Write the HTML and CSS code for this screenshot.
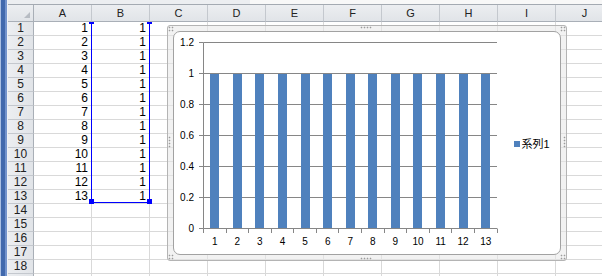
FILE: index.html
```html
<!DOCTYPE html>
<html lang="ja">
<head>
    <meta charset="UTF-8">
    <title>Sheet1 - グラフ</title>
    <link rel="stylesheet" href="styles.css">
</head>
<body>
    <div class="window">
        <div class="side-strip"></div>
        <div class="sheet">
            <div class="top-bar"></div>
            <div class="col-headers" id="col-headers">
                <div class="corner"></div>
            </div>
            <div class="rows" id="rows">
                <div class="range"></div>
                <div class="handle h-tl"></div>
                <div class="handle h-tr"></div>
                <div class="handle h-bl"></div>
                <div class="handle h-br"></div>
            </div>
        </div>

        <div class="chart">
            <span class="grip grip-tl"></span>
            <span class="grip grip-tr"></span>
            <span class="grip grip-bl"></span>
            <span class="grip grip-br"></span>
            <span class="grip grip-top"></span>
            <span class="grip grip-bottom"></span>
            <span class="grip grip-left"></span>
            <span class="grip grip-right"></span>
            <div class="chart-area">
                <svg class="plot" id="plot" width="386" height="222" viewBox="0 0 386 222">
                    <g id="gridlines"></g>
                    <g id="bars"></g>
                    <g id="axes"></g>
                    <g id="labels"></g>
                    <rect class="legend-key" x="340" y="109" width="6" height="6"></rect>
                    <text class="legend-text" x="347.5" y="116">系列1</text>
                </svg>
            </div>
        </div>
    </div>

    <script>
        // Datos de la hoja: columna A = 1..13, columna B = 1
        const cols = ['A', 'B', 'C', 'D', 'E', 'F', 'G', 'H', 'I', 'J'];
        const values = [];
        for (let i = 1; i <= 13; i++) values.push({ a: i, b: 1 });

        const header = document.getElementById('col-headers');
        cols.forEach(c => {
            const d = document.createElement('div');
            d.className = 'col-head';
            d.textContent = c;
            header.appendChild(d);
        });

        // 18 filas visibles, la 19 solo asoma por abajo (sin numero)
        const rows = document.getElementById('rows');
        for (let r = 1; r <= 19; r++) {
            const row = document.createElement('div');
            row.className = 'row';
            const head = document.createElement('div');
            head.className = 'row-head';
            if (r <= 18) head.textContent = r;
            row.appendChild(head);
            cols.forEach(c => {
                const cell = document.createElement('div');
                cell.className = 'cell';
                const v = values[r - 1];
                if (v && c === 'A') cell.textContent = v.a;
                if (v && c === 'B') cell.textContent = v.b;
                row.appendChild(cell);
            });
            rows.appendChild(row);
        }

        // Grafico de columnas
        const NS = 'http://www.w3.org/2000/svg';
        const x0 = 29.5, x1 = 323, yTop = 10.5, step = 31;
        const yZero = yTop + step * 6;
        const w = (x1 - x0) / values.length;

        function el(parent, tag, attrs, text) {
            const e = document.createElementNS(NS, tag);
            for (const k in attrs) e.setAttribute(k, attrs[k]);
            if (text !== undefined) e.textContent = text;
            document.getElementById(parent).appendChild(e);
            return e;
        }

        for (let k = 0; k <= 6; k++) {
            const y = yZero - k * step;
            if (k > 0) el('gridlines', 'line', { x1: x0, x2: x1, y1: y, y2: y, class: 'gridline' });
            el('axes', 'line', { x1: 25, x2: x0, y1: y, y2: y, class: 'axis' });
            const label = k === 5 ? '1' : k === 6 ? '1.2' : k === 0 ? '0' : (k * 0.2).toFixed(1);
            el('labels', 'text', { x: 20, y: y + 3.5, class: 'y-label' }, label);
        }

        values.forEach((v, i) => {
            const cx = x0 + (i + 0.5) * w;
            const top = Math.round(yZero - v.b * step * 5);
            el('bars', 'rect', { x: Math.round(cx - 4.5), y: top, width: 9, height: Math.ceil(yZero) - top, class: 'bar' });
            el('labels', 'text', { x: cx.toFixed(1), y: 213, class: 'x-label' }, v.a);
        });

        for (let k = 0; k <= values.length; k++) {
            const x = Math.round(x0 + k * w - 0.5) + 0.5;
            el('axes', 'line', { x1: x, x2: x, y1: yZero, y2: yZero + 4.5, class: 'axis' });
        }
        el('axes', 'line', { x1: x0, x2: x0, y1: yTop, y2: yZero, class: 'axis' });
        el('axes', 'line', { x1: x0, x2: x1, y1: yZero, y2: yZero, class: 'axis' });
    </script>
</body>
</html>
```

FILE: styles.css
```css
body {
    margin: 0;
    width: 602px;
    height: 276px;
    overflow: hidden;
    background: #fff;
    font-family: "Liberation Sans", Arial, sans-serif;
    color: #000;
}
.window {
    position: relative;
    display: flex;
    height: 276px;
}
.side-strip {
    flex: none;
    width: 8px;
    background: linear-gradient(to right, #a9bfe3 0 1px, #4169ad 1px 5px, #7393cc 5px 7px, #eef1f5 7px);
}
.sheet {
    flex: 1;
    display: flex;
    flex-direction: column;
    overflow: hidden;
}
.top-bar {
    flex: none;
    height: 5px;
    box-sizing: border-box;
    border-bottom: 1px solid #a4aab2;
    background: linear-gradient(to right, #eceef1 0 242px, #f8f8f8 242px);
}
.col-headers,
.row {
    display: grid;
    grid-template-columns: 26px repeat(10, 58px);
}
.col-headers {
    flex: none;
    height: 17px;
}
.col-head,
.corner {
    box-sizing: border-box;
    height: 17px;
    border-right: 1px solid #c4c8ce;
    border-bottom: 1px solid #a9afb7;
    background: linear-gradient(#eceef1, #e1e4e8);
    color: #222;
    font-size: 11px;
    line-height: 16px;
    text-align: center;
}
.corner {
    position: relative;
    border-right-color: #a9afb7;
}
.corner::after {
    content: "";
    position: absolute;
    right: 3px;
    bottom: 3px;
    border-left: 6px solid transparent;
    border-bottom: 6px solid #b7bcc3;
}
.rows {
    position: relative;
    flex: 1;
    overflow: hidden;
}
.row-head,
.cell {
    box-sizing: border-box;
    height: 14px;
    font-size: 12px;
    line-height: 13px;
}
.row-head {
    border-right: 1px solid #a9afb7;
    border-bottom: 1px solid #c4c8ce;
    background: linear-gradient(to right, #eceef1, #e1e4e8);
    color: #222;
    text-align: center;
}
.cell {
    border-right: 1px solid #d9d9d9;
    border-bottom: 1px solid #d9d9d9;
    padding-right: 3px;
    text-align: right;
}
.range {
    position: absolute;
    left: 83px;
    top: -1px;
    width: 59px;
    height: 182px;
    box-sizing: border-box;
    border: 1px solid #0000ff;
}
.handle {
    position: absolute;
    width: 5px;
    height: 5px;
    background: #0000ff;
}
.h-tl { left: 81px; top: -3px; }
.h-tr { left: 139px; top: -3px; }
.h-bl { left: 81px; top: 177px; }
.h-br { left: 139px; top: 177px; }

.chart {
    position: absolute;
    left: 167px;
    top: 25px;
    width: 400px;
    height: 236px;
    box-sizing: border-box;
    padding: 5px;
    border: 1px solid #b4b4b4;
    border-radius: 3px;
    background: rgba(232, 232, 232, 0.55);
}
.chart-area {
    height: 100%;
    box-sizing: border-box;
    border: 1px solid #a2a2a2;
    border-radius: 7px;
    background: #fff;
    overflow: hidden;
}
.plot {
    display: block;
}
.grip {
    position: absolute;
    background: radial-gradient(circle, #9c9c9c 0.7px, transparent 1.1px) 0 0 / 3px 3px;
}
.grip-tl { left: 0; top: 0; width: 6px; height: 6px; }
.grip-tr { right: 0; top: 0; width: 6px; height: 6px; }
.grip-bl { left: 0; bottom: 0; width: 6px; height: 6px; }
.grip-br { right: 0; bottom: 0; width: 6px; height: 6px; }
.grip-top { left: 192px; top: 0; width: 12px; height: 3px; }
.grip-bottom { left: 192px; bottom: 0; width: 12px; height: 3px; }
.grip-left { left: 0; top: 110px; width: 3px; height: 12px; }
.grip-right { right: 0; top: 110px; width: 3px; height: 12px; }

.gridline,
.axis {
    stroke: #868686;
    stroke-width: 1;
}
.bar {
    fill: #4f81bd;
}
.y-label,
.x-label {
    font-family: "Liberation Sans", Arial, sans-serif;
    font-size: 10px;
    fill: #000;
}
.y-label {
    text-anchor: end;
}
.x-label {
    text-anchor: middle;
}
.legend-key {
    fill: #4f81bd;
}
.legend-text {
    font-family: "Liberation Sans", "Noto Sans CJK JP", sans-serif;
    font-size: 11px;
    fill: #000;
}
```
